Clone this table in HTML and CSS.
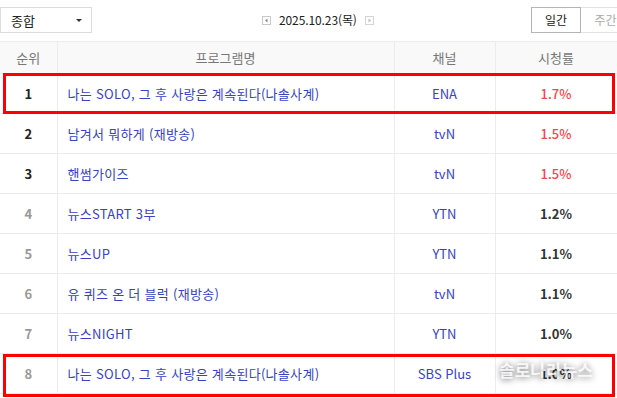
FILE: index.html
```html
<!DOCTYPE html>
<html lang="ko">
<head>
<meta charset="utf-8">
<link rel="stylesheet" href="styles.css">
</head>
<body>
<div class="page">
  <div class="topbar">
    <div class="select"><span>종합</span><span class="caret"></span></div>
    <div class="datenav">
      <span class="navbtn"><svg width="9" height="9" viewBox="0 0 9 9"><rect x="0.5" y="0.5" width="8" height="8" fill="#fff" stroke="#c8c8c8"/><path d="M5.5 2.5 L3 4.5 L5.5 6.5 Z" fill="#888"/></svg></span>
      <span class="date">2025.10.23(목)</span>
      <span class="navbtn"><svg width="9" height="9" viewBox="0 0 9 9"><rect x="0.5" y="0.5" width="8" height="8" fill="#fff" stroke="#d4d4d4"/><path d="M3.5 2.5 L6 4.5 L3.5 6.5 Z" fill="#bbb"/></svg></span>
    </div>
    <div class="tabs">
      <span class="tab on">일간</span>
      <span class="tab">주간</span>
    </div>
  </div>
  <table class="rank">
    <colgroup><col class="c1"><col class="c2"><col class="c3"><col class="c4"></colgroup>
    <thead>
      <tr><th>순위</th><th>프로그램명</th><th>채널</th><th>시청률</th></tr>
    </thead>
    <tbody>
      <tr class="top"><td class="no">1</td><td class="name">나는 SOLO, 그 후 사랑은 계속된다(나솔사계)</td><td class="ch">ENA</td><td class="rt">1.7%</td></tr>
      <tr class="top"><td class="no">2</td><td class="name">남겨서 뭐하게 (재방송)</td><td class="ch">tvN</td><td class="rt">1.5%</td></tr>
      <tr class="top"><td class="no">3</td><td class="name">핸썸가이즈</td><td class="ch">tvN</td><td class="rt">1.5%</td></tr>
      <tr><td class="no">4</td><td class="name">뉴스START 3부</td><td class="ch">YTN</td><td class="rt">1.2%</td></tr>
      <tr><td class="no">5</td><td class="name">뉴스UP</td><td class="ch">YTN</td><td class="rt">1.1%</td></tr>
      <tr><td class="no">6</td><td class="name">유 퀴즈 온 더 블럭 (재방송)</td><td class="ch">tvN</td><td class="rt">1.1%</td></tr>
      <tr><td class="no">7</td><td class="name">뉴스NIGHT</td><td class="ch">YTN</td><td class="rt">1.0%</td></tr>
      <tr><td class="no">8</td><td class="name">나는 SOLO, 그 후 사랑은 계속된다(나솔사계)</td><td class="ch">SBS Plus</td><td class="rt">1.0%</td></tr>
    </tbody>
  </table>
  <div class="mark mark1"></div>
  <div class="mark mark2"></div>
  <div class="watermark">솔로나라뉴스</div>
</div>
</body>
</html>
```
FILE: styles.css
```css
* { box-sizing: border-box; }
html, body { margin: 0; padding: 0; background: #fff; }
body {
  font-family: "Noto Sans CJK KR", "Noto Sans", sans-serif;
  font-size: 13px;
  color: #333;
  width: 617px;
  height: 398px;
  overflow: hidden;
}
.page { position: relative; width: 617px; height: 398px; overflow: hidden; }

.topbar {
  display: flex;
  align-items: center;
  height: 41px;
  padding-top: 7px;
  padding-bottom: 8px;
}
.select {
  flex: none;
  width: 92px;
  height: 26px;
  border: 1px solid #dcdcdc;
  display: flex;
  align-items: center;
  justify-content: space-between;
  padding: 0 9px 0 10px;
  font-size: 13px;
  color: #222;
  line-height: 1;
}
.caret {
  width: 0; height: 0;
  border-left: 3px solid transparent;
  border-right: 3px solid transparent;
  border-top: 3px solid #333;
}
.datenav {
  flex: none;
  display: flex;
  align-items: center;
  margin-left: 170px;
  height: 26px;
}
.navbtn { display: flex; width: 9px; height: 9px; }
.navbtn svg { display: block; }
.date { font-size: 12px; color: #222; margin: 0 8px; line-height: 1; letter-spacing: -0.1px; }
.tabs { flex: none; display: flex; margin-left: auto; margin-right: -14px; }
.tab {
  width: 50px;
  height: 26px;
  display: flex;
  align-items: center;
  justify-content: center;
  font-size: 12px;
  color: #aaa;
  border: 1px solid #e3e3e3;
  border-left: none;
  line-height: 1;
  background: #fff;
}
.tab.on { color: #222; border: 1px solid #b4b4b4; }

.rank {
  border-collapse: collapse;
  table-layout: fixed;
  width: 617px;
}
.c1 { width: 57px; }
.c2 { width: 337px; }
.c3 { width: 101px; }
.c4 { width: 122px; }
.rank th, .rank td {
  border: 1px solid #ececec;
  padding: 0;
  text-align: center;
  line-height: 1;
  white-space: nowrap;
  overflow: hidden;
}
.rank tr > :first-child { border-left: none; }
.rank th {
  height: 32px;
  background: #f9f9f9;
  color: #777;
  font-weight: normal;
  font-size: 13px;
}
.rank td { height: 40px; }
.rank td.no { font-weight: bold; color: #999; font-size: 13px; }
.rank tr.top td.no { color: #222; }
.rank td.name { text-align: left; padding-left: 10px; color: #3742c4; letter-spacing: 0.3px; }
.rank td.ch { color: #3742c4; }
.rank td.rt { font-weight: bold; color: #333; }
.rank tr.top td.rt { color: #f44848; font-weight: 500; }

.mark {
  position: absolute;
  left: 3px;
  width: 612px;
  border: 3px solid #ff0000;
}
.mark1 { top: 73px; height: 41px; }
.mark2 { top: 354px; height: 43px; }

.watermark {
  position: absolute;
  left: 499px;
  top: 361px;
  font-size: 17px;
  font-weight: bold;
  color: rgba(255,255,255,0.85);
  text-shadow: 0 0 6px rgba(0,0,0,0.35), 0 2px 6px rgba(0,0,0,0.25);
  line-height: 1;
}
```
